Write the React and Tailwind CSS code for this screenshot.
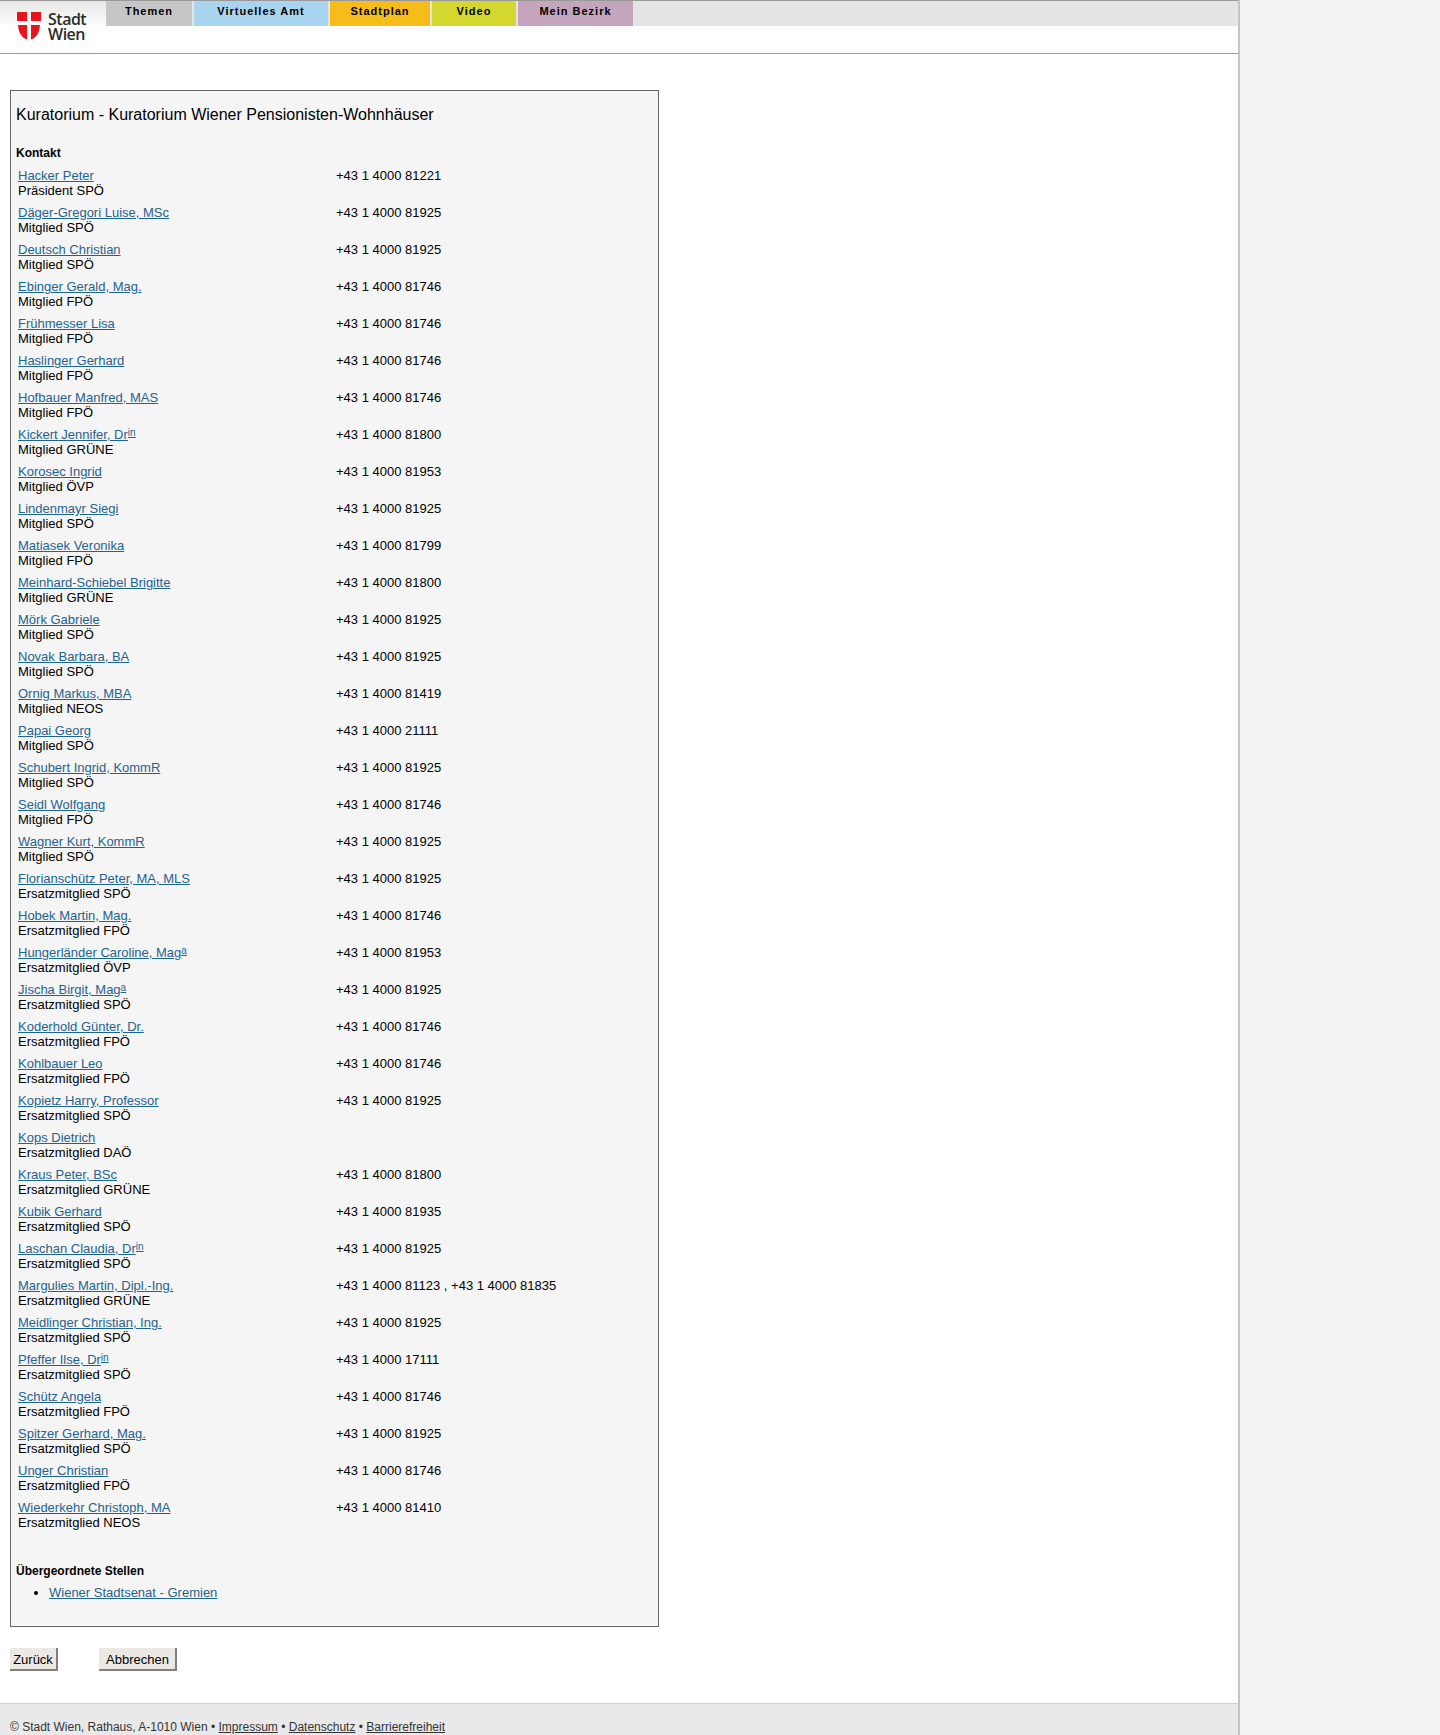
import React from "react";

const tabs = [
  { label: "Themen", width: "w-[86px]", color: "bg-[#c6c6c6]" },
  { label: "Virtuelles Amt", width: "w-[134px]", color: "bg-[#a9d4ef]" },
  { label: "Stadtplan", width: "w-[100px]", color: "bg-[#f6bd1a]" },
  { label: "Video", width: "w-[84px]", color: "bg-[#d4d72e]" },
  { label: "Mein Bezirk", width: "w-[115px]", color: "bg-[#c5a4bd]" },
];

const members = [
  ["Hacker Peter", "", "Präsident SPÖ", "+43 1 4000 81221"],
  ["Däger-Gregori Luise, MSc", "", "Mitglied SPÖ", "+43 1 4000 81925"],
  ["Deutsch Christian", "", "Mitglied SPÖ", "+43 1 4000 81925"],
  ["Ebinger Gerald, Mag.", "", "Mitglied FPÖ", "+43 1 4000 81746"],
  ["Frühmesser Lisa", "", "Mitglied FPÖ", "+43 1 4000 81746"],
  ["Haslinger Gerhard", "", "Mitglied FPÖ", "+43 1 4000 81746"],
  ["Hofbauer Manfred, MAS", "", "Mitglied FPÖ", "+43 1 4000 81746"],
  ["Kickert Jennifer, Dr", "in", "Mitglied GRÜNE", "+43 1 4000 81800"],
  ["Korosec Ingrid", "", "Mitglied ÖVP", "+43 1 4000 81953"],
  ["Lindenmayr Siegi", "", "Mitglied SPÖ", "+43 1 4000 81925"],
  ["Matiasek Veronika", "", "Mitglied FPÖ", "+43 1 4000 81799"],
  ["Meinhard-Schiebel Brigitte", "", "Mitglied GRÜNE", "+43 1 4000 81800"],
  ["Mörk Gabriele", "", "Mitglied SPÖ", "+43 1 4000 81925"],
  ["Novak Barbara, BA", "", "Mitglied SPÖ", "+43 1 4000 81925"],
  ["Ornig Markus, MBA", "", "Mitglied NEOS", "+43 1 4000 81419"],
  ["Papai Georg", "", "Mitglied SPÖ", "+43 1 4000 21111"],
  ["Schubert Ingrid, KommR", "", "Mitglied SPÖ", "+43 1 4000 81925"],
  ["Seidl Wolfgang", "", "Mitglied FPÖ", "+43 1 4000 81746"],
  ["Wagner Kurt, KommR", "", "Mitglied SPÖ", "+43 1 4000 81925"],
  ["Florianschütz Peter, MA, MLS", "", "Ersatzmitglied SPÖ", "+43 1 4000 81925"],
  ["Hobek Martin, Mag.", "", "Ersatzmitglied FPÖ", "+43 1 4000 81746"],
  ["Hungerländer Caroline, Mag", "a", "Ersatzmitglied ÖVP", "+43 1 4000 81953"],
  ["Jischa Birgit, Mag", "a", "Ersatzmitglied SPÖ", "+43 1 4000 81925"],
  ["Koderhold Günter, Dr.", "", "Ersatzmitglied FPÖ", "+43 1 4000 81746"],
  ["Kohlbauer Leo", "", "Ersatzmitglied FPÖ", "+43 1 4000 81746"],
  ["Kopietz Harry, Professor", "", "Ersatzmitglied SPÖ", "+43 1 4000 81925"],
  ["Kops Dietrich", "", "Ersatzmitglied DAÖ", ""],
  ["Kraus Peter, BSc", "", "Ersatzmitglied GRÜNE", "+43 1 4000 81800"],
  ["Kubik Gerhard", "", "Ersatzmitglied SPÖ", "+43 1 4000 81935"],
  ["Laschan Claudia, Dr", "in", "Ersatzmitglied SPÖ", "+43 1 4000 81925"],
  ["Margulies Martin, Dipl.-Ing.", "", "Ersatzmitglied GRÜNE", "+43 1 4000 81123 , +43 1 4000 81835"],
  ["Meidlinger Christian, Ing.", "", "Ersatzmitglied SPÖ", "+43 1 4000 81925"],
  ["Pfeffer Ilse, Dr", "in", "Ersatzmitglied SPÖ", "+43 1 4000 17111"],
  ["Schütz Angela", "", "Ersatzmitglied FPÖ", "+43 1 4000 81746"],
  ["Spitzer Gerhard, Mag.", "", "Ersatzmitglied SPÖ", "+43 1 4000 81925"],
  ["Unger Christian", "", "Ersatzmitglied FPÖ", "+43 1 4000 81746"],
  ["Wiederkehr Christoph, MA", "", "Ersatzmitglied NEOS", "+43 1 4000 81410"],
];

const linkClass = "text-[#1f6390] underline";

const Logo = () => (
  <svg width="24" height="28" viewBox="0 0 24 28" className="block">
    <path d="M0 0H10V9H0Z" fill="#e8131b" />
    <path d="M14 0H24V9H14Z" fill="#e8131b" />
    <path d="M1 13H10V27.5C5 26 1.5 21 1 13Z" fill="#e8131b" />
    <path d="M14 13H23C22.5 21 19 26 14 27.5Z" fill="#e8131b" />
  </svg>
);

const App = () => {
  return (
    <div className="flex w-full min-h-[1735px] bg-[#f3f3f3] font-['Liberation_Sans',Arial,sans-serif] text-[13px] leading-[15px] text-black">
      <div className="flex flex-col w-[1240px] bg-white border-r-2 border-[#c4c4c4]">
        <header className="flex h-[54px] border-t border-b border-t-[#999] border-b-[#999]">
          <div className="flex items-start gap-[7px] w-[106px] h-full pl-[17px] pt-[11px] bg-gradient-to-b from-[#e6e6e6] to-white to-[50%]">
            <Logo />
            <div className="font-['Open_Sans',sans-serif] font-semibold text-[16px] leading-[15px] tracking-[-0.5px] text-[#2b2b2b]">
              Stadt
              <br />
              Wien
            </div>
          </div>
          <nav className="flex flex-1 h-[25px] bg-[#e4e4e4]">
            {tabs.map((tab) => (
              <div
                key={tab.label}
                className={`${tab.width} ${tab.color} mr-0.5 pt-1 text-center text-[11px] leading-[13px] font-bold tracking-[1px] text-black`}
              >
                {tab.label}
              </div>
            ))}
          </nav>
        </header>

        <main className="flex-1 pl-2.5 pt-9">
          <section className="w-[649px] h-[1537px] border border-[#666] bg-[#f5f5f5] pl-[5px] pt-[15px]">
            <h1 className="text-[16px] leading-[18px] font-normal">
              Kuratorium - Kuratorium Wiener Pensionisten-Wohnhäuser
            </h1>
            <h2 className="mt-[23px] text-[12px] leading-[13px] font-bold">Kontakt</h2>
            <div className="mt-[8px] flex flex-col gap-[7px] pl-0.5">
              {members.map(([name, sup, role, phone]) => (
                <div key={name} className="grid grid-cols-[318px_1fr]">
                  <div>
                    <a href="#" className="text-[#1f6390]">
                      <span className="underline">{name}</span>
                      {sup && <sup className="top-[-3px] text-[10px] underline">{sup}</sup>}
                    </a>
                    <div>{role}</div>
                  </div>
                  <div>{phone}</div>
                </div>
              ))}
            </div>
            <h2 className="mt-[35px] text-[12px] leading-[13px] font-bold">Übergeordnete Stellen</h2>
            <ul className="mt-[7px] pl-[33px] list-disc">
              <li>
                <a href="#" className={linkClass}>
                  Wiener Stadtsenat - Gremien
                </a>
              </li>
            </ul>
          </section>

          <div className="flex gap-[41px] mt-[21px]">
            <button className="w-12 h-[23px] pt-px bg-[#ece9e4] border-r-2 border-b-2 border-[#808080] text-[13px]">
              Zurück
            </button>
            <button className="w-[78px] h-[23px] pt-px pl-px bg-[#ece9e4] border-r-2 border-b-2 border-[#808080] text-[13px]">
              Abbrechen
            </button>
          </div>
        </main>

        <footer className="h-8 mt-auto bg-[#e9e9e9] border-t border-[#d0d0d0] pl-2.5 pt-4 text-[12px] text-[#333]">
          © Stadt Wien, Rathaus, A-1010 Wien •{" "}
          <a href="#" className="underline">Impressum</a> •{" "}
          <a href="#" className="underline">Datenschutz</a> •{" "}
          <a href="#" className="underline">Barrierefreiheit</a>
        </footer>
      </div>
    </div>
  );
};

export default App;
